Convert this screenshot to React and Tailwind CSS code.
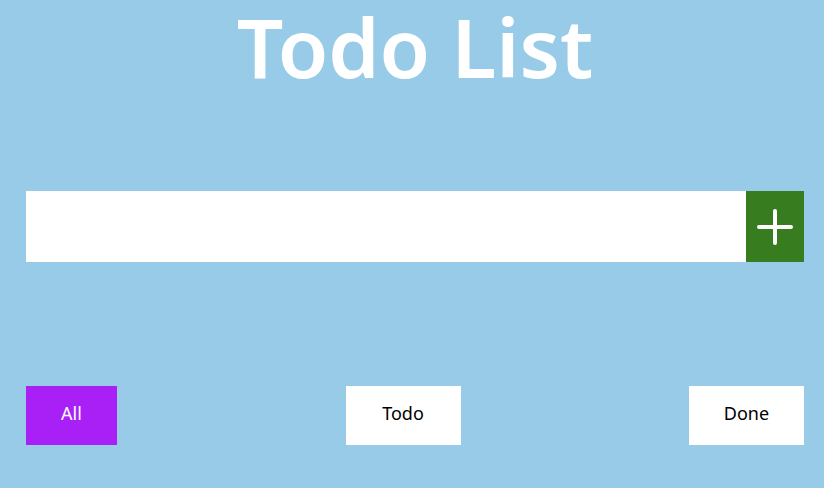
export default function App() {
  return (
    <div className="min-h-[488px] bg-[#97cbe7] font-['Noto_Sans',sans-serif]">
      <div className="ml-[26px] mr-[20px] flex flex-col">
        <h1 className="text-center text-[82px] font-semibold leading-[92px] text-white">Todo List</h1>

        <div className="mt-[99px] flex h-[71px]">
          <input type="text" className="flex-1 bg-white px-3 text-lg outline-none" />
          <button type="button" className="flex w-[58px] items-center justify-center bg-[#377d20]">
            <svg width="36" height="36" viewBox="0 0 36 36" fill="none" stroke="white" strokeWidth="4" strokeLinecap="round">
              <path d="M18 2v32M2 18h32" />
            </svg>
          </button>
        </div>

        <div className="mt-[124px] flex justify-between text-lg">
          <button type="button" className="h-[59px] w-[91px] bg-[#a820f5] pb-[6px] text-white">All</button>
          <button type="button" className="h-[59px] w-[115px] bg-white pb-[6px] text-black">Todo</button>
          <button type="button" className="h-[59px] w-[115px] bg-white pb-[6px] text-black">Done</button>
        </div>
      </div>
    </div>
  );
}
